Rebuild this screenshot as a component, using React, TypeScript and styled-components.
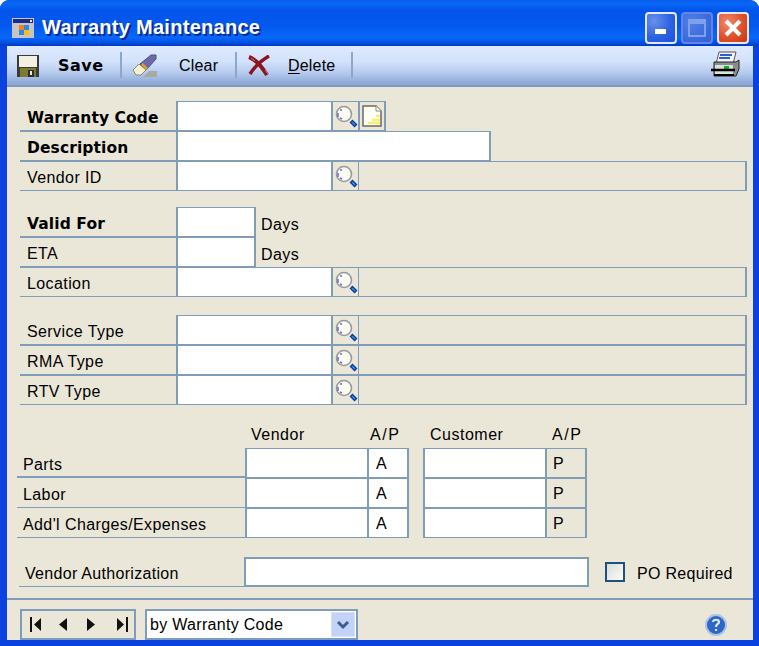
import React from "react";
import styled, { createGlobalStyle } from "styled-components";

const line = "#7f9db9";

const Global = createGlobalStyle`
  html, body { margin: 0; padding: 0; background: #fff; }
  * { box-sizing: border-box; }
`;

const Window = styled.div`
  width: 759px;
  height: 646px;
  display: flex;
  flex-direction: column;
  border-radius: 9px 9px 0 0;
  overflow: hidden;
  background: #0a42e0;
  font-family: "Liberation Sans", Arial, sans-serif;
  font-size: 16px;
  letter-spacing: 0.4px;
  color: #000;
`;

const TitleBar = styled.div`
  height: 46px;
  flex: none;
  display: flex;
  align-items: center;
  padding: 9px 10px 0 12px;
  background: linear-gradient(180deg, #0a5ae8 0%, #0668f8 8%, #0355ea 22%, #0458ee 55%, #0868fa 82%, #0352e2 92%, #0238c4 100%);
`;

const TitleText = styled.div`
  margin-left: 8px;
  font-family: "Liberation Sans", sans-serif;
  font-weight: 700;
  font-size: 20px;
  letter-spacing: 0.28px;
  color: #fff;
  text-shadow: 2px 2px 0 #0a2a9c;
  flex: 1;
`;

const WinButton = styled.div<{ $kind: "min" | "max" | "close" }>`
  width: 32px;
  height: 32px;
  margin-left: 4px;
  border-radius: 4px;
  border: 2px solid ${(p) => (p.$kind === "max" ? "#5f86e8" : "#e4e8f6")};
  display: flex;
  align-items: center;
  justify-content: center;
  background: ${(p) =>
    p.$kind === "close"
      ? "radial-gradient(circle at 30% 30%, #f08a6c, #e0502a 55%, #c83a10)"
      : p.$kind === "max"
      ? "radial-gradient(circle at 30% 30%, #5080e4, #3a68dc 70%, #3060d8)"
      : "radial-gradient(circle at 25% 25%, #6a90ec, #2e62e4 55%, #1a50e0)"};
`;

const Frame = styled.div`
  flex: 1;
  display: flex;
  flex-direction: column;
  margin: 0 6px 6px 7px;
  background: #ebe7d8;
  min-height: 0;
`;

const Toolbar = styled.div`
  height: 41px;
  flex: none;
  display: flex;
  align-items: center;
  background: linear-gradient(180deg, #dfeafe 0%, #d2e2fb 40%, #b4c9ec 70%, #8ea9d6 95%);
  border-bottom: 2px solid #7d97bf;
  padding-bottom: 2px;
`;

const ToolButton = styled.div<{ $width: number; $pad: number; $gap: number; $bold?: boolean }>`
  width: ${(p) => p.$width}px;
  height: 26px;
  display: flex;
  align-items: center;
  gap: ${(p) => p.$gap}px;
  padding: 2px 0 0 ${(p) => p.$pad}px;
  border-right: 2px solid #8ea6c8;
  font-family: ${(p) => (p.$bold ? '"DejaVu Sans", sans-serif' : '"Liberation Sans", sans-serif')};
  font-weight: ${(p) => (p.$bold ? 700 : 400)};
  font-size: 16px;
  letter-spacing: ${(p) => (p.$bold ? 0.5 : 0.2)}px;
  u { text-underline-offset: 2px; }
`;

const PrintSlot = styled.div`
  margin-left: auto;
  margin-right: 13px;
  height: 26px;
  display: flex;
  align-items: center;
`;

const Content = styled.div`
  flex: 1;
  padding: 14px 6px 0 13px;
  display: flex;
  flex-direction: column;
`;

const Group = styled.div<{ $top: number }>`
  margin-top: ${(p) => p.$top}px;
`;

const Row = styled.div`
  display: flex;
  height: 30px;
  ${Group} > &:first-child > .lbl { border-top-color: transparent; }
`;

const Label = styled.div<{ $bold?: boolean }>`
  width: 156px;
  flex: none;
  display: flex;
  align-items: center;
  padding: 3px 0 0 7px;
  border-top: 1px solid ${line};
  border-bottom: 1px solid ${line};
  font-family: ${(p) => (p.$bold ? '"DejaVu Sans", sans-serif' : '"Liberation Sans", sans-serif')};
  font-weight: ${(p) => (p.$bold ? 700 : 400)};
  font-size: ${(p) => (p.$bold ? 15.5 : 16)}px;
  letter-spacing: ${(p) => (p.$bold ? 0.1 : 0.4)}px;
`;

const Field = styled.div<{ $w: number; $end?: boolean }>`
  width: ${(p) => p.$w}px;
  flex: none;
  background: #fff;
  border: solid ${line};
  border-width: 1px ${(p) => (p.$end ? 2 : 0)}px 1px 2px;
`;

const IconCell = styled.div<{ $w: number; $end?: boolean }>`
  width: ${(p) => p.$w}px;
  flex: none;
  display: flex;
  align-items: center;
  justify-content: center;
  border: solid ${line};
  border-width: 1px ${(p) => (p.$end ? 2 : 0)}px 1px 2px;
`;

const Filler = styled.div`
  flex: 1;
  border: solid ${line};
  border-width: 1px 2px 1px 1px;
`;

const Unit = styled.div`
  margin-left: 5px;
  padding-top: 5px;
  display: flex;
  align-items: center;
`;

const Table = styled.div`
  margin: 15px 0 0 -3px;
  display: grid;
  grid-template-columns: 228px 122px 42px 14px 122px 42px;
  grid-template-rows: 28px repeat(3, 30px);
  width: 570px;
`;

const Head = styled.div<{ $col: number; $pad: number; $ap?: boolean }>`
  grid-column: ${(p) => p.$col};
  grid-row: 1;
  display: flex;
  align-items: center;
  padding: 2px 0 0 ${(p) => p.$pad}px;
  letter-spacing: ${(p) => (p.$ap ? 1.6 : 0.5)}px;
`;

const TLabel = styled.div<{ $row: number }>`
  grid-column: 1;
  grid-row: ${(p) => p.$row};
  display: flex;
  align-items: center;
  padding: 5px 0 0 6px;
  border-bottom: ${(p) => (p.$row === 2 ? 2 : 1)}px solid ${line};
`;

const TField = styled.div<{ $col: number; $row: number }>`
  grid-column: ${(p) => p.$col};
  grid-row: ${(p) => p.$row};
  background: #fff;
  border: solid ${line};
  border-width: 1px 0 1px 2px;
`;

const ApCell = styled.div<{ $col: number; $row: number; $white?: boolean }>`
  grid-column: ${(p) => p.$col};
  grid-row: ${(p) => p.$row};
  background: ${(p) => (p.$white ? "#fff" : "transparent")};
  border: solid ${line};
  border-width: 1px 2px 1px 2px;
  display: flex;
  align-items: center;
  padding: 2px 0 0 ${(p) => (p.$white ? 7 : 6)}px;
`;

const AuthRow = styled.div`
  margin: 19px 0 0 -1px;
  display: flex;
  align-items: stretch;
  height: 30px;
`;

const AuthLabel = styled.div`
  width: 225px;
  display: flex;
  align-items: center;
  padding: 4px 0 0 6px;
  letter-spacing: 0.3px;
  border-bottom: 1px solid ${line};
`;

const AuthField = styled.div`
  width: 345px;
  background: #fff;
  border: 2px solid ${line};
`;

const CheckWrap = styled.div`
  margin-left: 16px;
  display: flex;
  align-items: center;
  gap: 12px;
  letter-spacing: 0.3px;
`;

const CheckText = styled.span`
  padding-top: 4px;
`;

const CheckBox = styled.div`
  width: 20px;
  height: 20px;
  border: 2px solid #1c5180;
  background: linear-gradient(135deg, #dcdcd7, #fbfbf9);
`;

const Footer = styled.div`
  height: 42px;
  flex: none;
  border-top: 2px solid ${line};
  display: flex;
  align-items: flex-end;
  padding: 0 26px 0 13px;
`;

const NavBox = styled.div`
  width: 116px;
  height: 31px;
  border: 2px solid ${line};
  display: flex;
  align-items: center;
  justify-content: center;
  padding-left: 2px;
`;

const Dropdown = styled.div`
  margin-left: 9px;
  width: 213px;
  height: 31px;
  border: 2px solid ${line};
  background: #fff;
  display: flex;
  align-items: center;
  justify-content: space-between;
  padding: 0 1px 0 3px;
  letter-spacing: 0.3px;
`;

const DropArrow = styled.div`
  width: 24px;
  height: 25px;
  background: #c3d3f8;
  border: 1px solid #d8e3fb;
  display: flex;
  align-items: center;
  justify-content: center;
`;

const HelpSlot = styled.div`
  margin-left: auto;
  margin-bottom: 4px;
  display: flex;
`;

const Lookup = () => (
  <svg width="24" height="24" viewBox="0 0 24 24">
    <circle cx="10" cy="10" r="7.5" fill="#fbfbf4" stroke="#9a9a9a" strokeWidth="1.6" />
    <path d="M4 9v4M6 14l2 1M6 6h2" stroke="#6a6ad8" strokeWidth="1.5" />
    <path d="M17 17l5 5" stroke="#0a3a9a" strokeWidth="4" />
    <path d="M18 18l3 3" stroke="#2a90e8" strokeWidth="1.6" />
  </svg>
);

const NewDoc = () => (
  <svg width="20" height="22" viewBox="0 0 20 22">
    <path d="M1 1h13l5 5v15H1z" fill="#fffff4" stroke="#6a6a6a" strokeWidth="1.5" />
    <path d="M14 1v5h5" fill="#fff" stroke="#888" />
    <path d="M6 18h12M10 15h8M14 11h4" stroke="#f6f078" strokeWidth="2.5" />
  </svg>
);

const Floppy = () => (
  <svg width="22" height="22" viewBox="0 0 22 22" shapeRendering="crispEdges">
    <rect width="22" height="22" fill="#3a3a3a" />
    <rect x="2" y="1" width="18" height="11" fill="#f4f0e0" />
    <rect x="3" y="13" width="16" height="9" fill="#7c7c30" />
    <rect x="11" y="15" width="6" height="7" fill="#2e2e2e" />
    <rect x="13" y="16" width="2" height="4" fill="#e8e8e8" />
  </svg>
);

const Eraser = () => (
  <svg width="26" height="24" viewBox="0 0 26 24">
    <path d="M9 10L20 1h5v4L15 16z" fill="#6a6aa8" stroke="#50507a" />
    <path d="M2 16l6-6 7 6-5 5H5z" fill="#f6f0d0" stroke="#8a8a70" />
    <path d="M11 10l5 5" stroke="#d8a030" strokeWidth="2.5" />
    <path d="M12 23h14v-6h-8z" fill="#a8a8a4" />
  </svg>
);

const RedX = () => (
  <svg width="23" height="22" viewBox="0 0 23 22">
    <path d="M1 2c6 2 13 10 18 18" stroke="#8a1420" strokeWidth="4" fill="none" />
    <path d="M21 1C14 5 7 11 2 19" stroke="#8a1420" strokeWidth="3.5" fill="none" />
    <path d="M3 3l4 3M17 15l3 4" stroke="#c87880" strokeWidth="1" />
  </svg>
);

const Printer = () => (
  <svg width="29" height="27" viewBox="0 0 29 27">
    <path d="M8 1h17l-3 12H5z" fill="#f4f6fc" stroke="#555" />
    <path d="M9 4h12M8 7h11" stroke="#3060c8" strokeWidth="2" />
    <path d="M3 11h22l3-2v9l-3 7H3z" fill="#8c8c8c" stroke="#222" />
    <rect x="4" y="14" width="18" height="9" fill="#d8e2dc" />
    <rect x="13" y="15" width="5" height="3" fill="#10b020" />
    <path d="M0 19h24" stroke="#000" strokeWidth="2.5" />
    <path d="M3 24h20" stroke="#000" strokeWidth="2" />
  </svg>
);

const AppIcon = () => (
  <svg width="22" height="20" viewBox="0 0 22 20" shapeRendering="crispEdges">
    <rect width="22" height="20" fill="#c8c4c0" />
    <rect x="1" y="1" width="20" height="4" fill="#1a2a90" />
    <rect x="18" y="2" width="2" height="2" fill="#e8e8e8" />
    <rect x="7" y="7" width="5" height="5" fill="#f08020" />
    <rect x="12" y="7" width="5" height="5" fill="#2a8ae8" />
    <rect x="7" y="12" width="5" height="5" fill="#2a8ae8" />
    <rect x="12" y="12" width="5" height="5" fill="#f8c010" />
  </svg>
);

const Help = () => (
  <svg width="22" height="22" viewBox="0 0 22 22">
    <circle cx="11" cy="11" r="10" fill="#2f66c8" stroke="#a8c4e8" strokeWidth="2" />
    <path d="M8 8c0-3 6-3 6 0 0 2-3 2-3 5" stroke="#dfeaff" strokeWidth="2.2" fill="none" />
    <rect x="10" y="15" width="2" height="2" fill="#dfeaff" />
  </svg>
);

const NavIcons = () => (
  <svg width="98" height="17" viewBox="0 0 98 17">
    <rect x="0" y="1" width="2" height="15" fill="#111" />
    <polygon points="4,8.5 11,2 11,15" fill="#111" />
    <polygon points="29,8.5 37,2 37,15" fill="#111" />
    <polygon points="65,8.5 57,2 57,15" fill="#111" />
    <polygon points="94,8.5 87,2 87,15" fill="#111" />
    <rect x="96" y="1" width="2" height="15" fill="#111" />
  </svg>
);

const Chevron = () => (
  <svg width="14" height="10" viewBox="0 0 14 10">
    <path d="M2 2l5 5 5-5" stroke="#3f5c8c" strokeWidth="3" fill="none" />
  </svg>
);

const LookupRow = ({ label, bold }: { label: string; bold?: boolean }) => (
  <Row>
    <Label className="lbl" $bold={bold}>{label}</Label>
    <Field $w={155} />
    <IconCell $w={27}><Lookup /></IconCell>
    <Filler />
  </Row>
);

const rows = [
  { row: 2, label: "Parts" },
  { row: 3, label: "Labor" },
  { row: 4, label: "Add'l Charges/Expenses" },
];

export default function App() {
  return (
    <>
      <Global />
      <Window>
        <TitleBar>
          <AppIcon />
          <TitleText>Warranty Maintenance</TitleText>
          <WinButton $kind="min">
            <svg width="14" height="14" viewBox="0 0 14 14"><rect x="1" y="8" width="11" height="5" fill="#fff" /></svg>
          </WinButton>
          <WinButton $kind="max">
            <svg width="18" height="18" viewBox="0 0 18 18"><path d="M1 1h16v16H1z" fill="none" stroke="#7fa0ec" strokeWidth="2" /><rect x="1" y="1" width="16" height="4" fill="#7fa0ec" /></svg>
          </WinButton>
          <WinButton $kind="close">
            <svg width="20" height="20" viewBox="0 0 20 20"><path d="M3 3l14 14M17 3L3 17" stroke="#fff" strokeWidth="4" /></svg>
          </WinButton>
        </TitleBar>
        <Frame>
          <Toolbar>
            <ToolButton $width={115} $pad={10} $gap={19} $bold><Floppy />Save</ToolButton>
            <ToolButton $width={115} $pad={9} $gap={22}><Eraser />Clear</ToolButton>
            <ToolButton $width={116} $pad={11} $gap={17}><RedX /><span><u>D</u>elete</span></ToolButton>
            <PrintSlot><Printer /></PrintSlot>
          </Toolbar>
          <Content>
            <Group $top={0}>
              <Row>
                <Label className="lbl" $bold>Warranty Code</Label>
                <Field $w={155} />
                <IconCell $w={27}><Lookup /></IconCell>
                <IconCell $w={28} $end><NewDoc /></IconCell>
              </Row>
              <Row>
                <Label className="lbl" $bold>Description</Label>
                <Field $w={315} $end />
              </Row>
              <LookupRow label="Vendor ID" />
            </Group>
            <Group $top={16}>
              <Row>
                <Label className="lbl" $bold>Valid For</Label>
                <Field $w={80} $end />
                <Unit>Days</Unit>
              </Row>
              <Row>
                <Label className="lbl">ETA</Label>
                <Field $w={80} $end />
                <Unit>Days</Unit>
              </Row>
              <LookupRow label="Location" />
            </Group>
            <Group $top={18}>
              <LookupRow label="Service Type" />
              <LookupRow label="RMA Type" />
              <LookupRow label="RTV Type" />
            </Group>
            <Table>
              <Head $col={2} $pad={6}>Vendor</Head>
              <Head $col={3} $pad={3} $ap>A/P</Head>
              <Head $col={5} $pad={7}>Customer</Head>
              <Head $col={6} $pad={7} $ap>A/P</Head>
              {rows.map((r) => (
                <React.Fragment key={r.row}>
                  <TLabel $row={r.row}>{r.label}</TLabel>
                  <TField $col={2} $row={r.row} />
                  <ApCell $col={3} $row={r.row} $white>A</ApCell>
                  <TField $col={5} $row={r.row} />
                  <ApCell $col={6} $row={r.row}>P</ApCell>
                </React.Fragment>
              ))}
            </Table>
            <AuthRow>
              <AuthLabel>Vendor Authorization</AuthLabel>
              <AuthField />
              <CheckWrap><CheckBox /><CheckText>PO Required</CheckText></CheckWrap>
            </AuthRow>
          </Content>
          <Footer>
            <NavBox><NavIcons /></NavBox>
            <Dropdown>by Warranty Code<DropArrow><Chevron /></DropArrow></Dropdown>
            <HelpSlot><Help /></HelpSlot>
          </Footer>
        </Frame>
      </Window>
    </>
  );
}
